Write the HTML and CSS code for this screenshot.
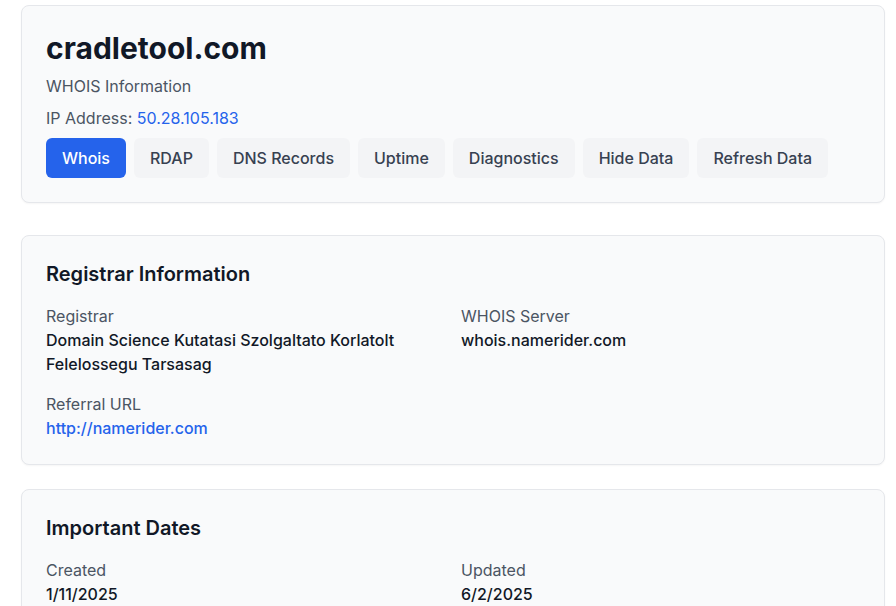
FILE: index.html
```html
<!DOCTYPE html>
<html lang="en">
<head>
<meta charset="utf-8">
<title>cradletool.com - WHOIS</title>
<link rel="stylesheet" href="styles.css">
</head>
<body>
<main class="page">
  <section class="card card-header">
    <h1 class="title">cradletool.com</h1>
    <p class="subtitle">WHOIS Information</p>
    <p class="ip">IP Address: <a class="link" href="#">50.28.105.183</a></p>
    <div class="tabs">
      <button class="btn btn-active">Whois</button>
      <button class="btn">RDAP</button>
      <button class="btn">DNS Records</button>
      <button class="btn">Uptime</button>
      <button class="btn">Diagnostics</button>
      <button class="btn">Hide Data</button>
      <button class="btn">Refresh Data</button>
    </div>
  </section>

  <section class="card">
    <h2 class="section-title">Registrar Information</h2>
    <div class="grid">
      <div class="field">
        <div class="label">Registrar</div>
        <div class="value">Domain Science Kutatasi Szolgaltato Korlatolt Felelossegu Tarsasag</div>
      </div>
      <div class="field">
        <div class="label">WHOIS Server</div>
        <div class="value">whois.namerider.com</div>
      </div>
      <div class="field">
        <div class="label">Referral URL</div>
        <a class="value link" href="#">http://namerider.com</a>
      </div>
    </div>
  </section>

  <section class="card">
    <h2 class="section-title">Important Dates</h2>
    <div class="grid">
      <div class="field">
        <div class="label">Created</div>
        <div class="value">1/11/2025</div>
      </div>
      <div class="field">
        <div class="label">Updated</div>
        <div class="value">6/2/2025</div>
      </div>
    </div>
  </section>
</main>
</body>
</html>
```

FILE: styles.css
```css
* { box-sizing: border-box; }
html, body { margin: 0; padding: 0; background: #ffffff; }
body {
  font-family: Inter, "Noto Sans", "Liberation Sans", sans-serif;
  font-size: 16px;
  line-height: 24px;
  color: #111827;
}
.page {
  padding: 5px 11px 24px 21px;
  display: flex;
  flex-direction: column;
}
.card {
  background: #f9fafb;
  border: 1px solid #e5e7eb;
  border-radius: 8px;
  padding: 24px;
  box-shadow: 0 1px 2px rgba(0, 0, 0, 0.04);
  margin-bottom: 24px;
}
.card-header { margin-bottom: 32px; }
.title {
  margin: 0;
  font-size: 30px;
  line-height: 36px;
  font-weight: 700;
  color: #111827;
}
.subtitle {
  margin: 8px 0 0;
  color: #4b5563;
}
.ip {
  margin: 8px 0 0;
  color: #4b5563;
}
.link { color: #2563eb; text-decoration: none; }
.tabs {
  margin-top: 8px;
  display: flex;
  flex-wrap: wrap;
  gap: 8px;
}
.btn {
  font-family: inherit;
  font-size: 16px;
  line-height: 24px;
  font-weight: 500;
  height: 40px;
  padding: 8px 16px;
  border: none;
  border-radius: 6px;
  background: #f3f4f6;
  color: #374151;
  cursor: pointer;
}
.btn-active {
  background: #2563eb;
  color: #ffffff;
}
.section-title {
  margin: 0;
  font-size: 20px;
  line-height: 28px;
  font-weight: 600;
  color: #111827;
}
.grid {
  margin-top: 16px;
  display: grid;
  grid-template-columns: 1fr 1fr;
  column-gap: 16px;
  row-gap: 16px;
}
.label { color: #4b5563; }
.value {
  font-weight: 500;
  color: #111827;
  display: block;
}
.value.link { color: #2563eb; }
```
